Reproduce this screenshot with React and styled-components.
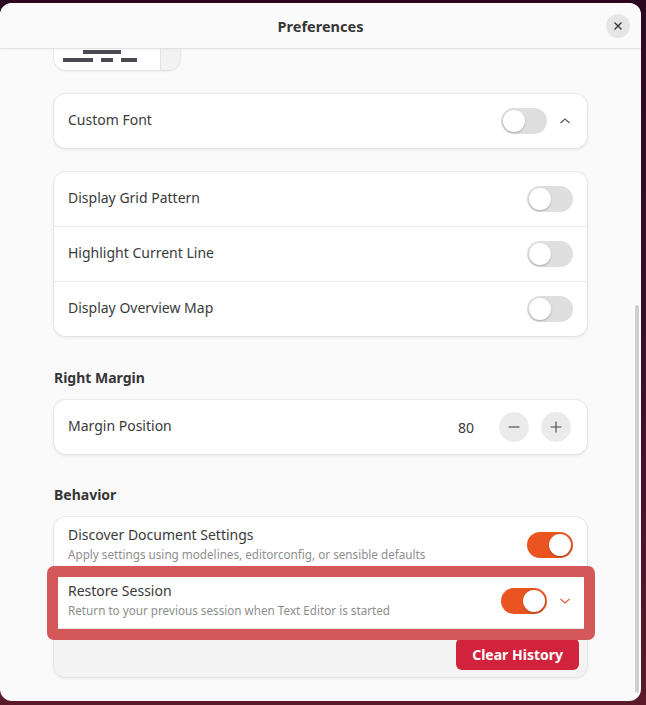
import React from 'react'
import styled, { createGlobalStyle } from 'styled-components'

const GlobalStyle = createGlobalStyle`
  body {
    margin: 0;
    background: linear-gradient(180deg, #2a0920 0%, #3d0d2a 50%, #5a1a2a 100%);
    font-family: "Noto Sans", "Open Sans", sans-serif;
  }
`

const Desktop = styled.div`
  height: 705px;
  padding-top: 3px;
  box-sizing: border-box;
`

const Window = styled.div`
  position: relative;
  width: 641px;
  height: 698px;
  background: #fafafa;
  border-radius: 12px;
  overflow: hidden;
  display: flex;
  flex-direction: column;
`

const HeaderBar = styled.div`
  position: relative;
  z-index: 3;
  height: 45px;
  flex-shrink: 0;
  display: grid;
  grid-template-columns: 1fr auto 1fr;
  align-items: center;
  background: #fafafa;
  border-bottom: 1px solid #e2e2e2;
  box-shadow: 0 1px 3px rgba(0, 0, 0, 0.04);
`

const Title = styled.h1`
  grid-column: 2;
  margin: 0;
  font-size: 14.5px;
  font-weight: 700;
  color: #363636;
`

const CloseButton = styled.button`
  grid-column: 3;
  justify-self: end;
  margin: 0 11px 0 0;
  width: 24px;
  height: 24px;
  border: none;
  border-radius: 50%;
  background: #e6e6e6;
  display: flex;
  align-items: center;
  justify-content: center;
  padding: 0;
`

const Content = styled.div`
  position: relative;
  flex: 1;
  overflow: hidden;
  display: flex;
  justify-content: center;
`

const Column = styled.div`
  width: 533px;
  display: flex;
  flex-direction: column;
`

const PreviewStub = styled.div`
  width: 126px;
  height: 21px;
  flex-shrink: 0;
  display: flex;
  background: #fff;
  border-radius: 0 0 12px 12px;
  box-shadow: 0 1px 3px rgba(0, 0, 0, 0.1), 0 0 0 1px rgba(0, 0, 0, 0.03);
  overflow: hidden;
`

const PreviewText = styled.div`
  flex: 1;
`

const PreviewArrow = styled.div`
  width: 19px;
  background: #f2f2f2;
  border-left: 1px solid #e3e3e3;
`

const Card = styled.div`
  background: #fff;
  border-radius: 12px;
  margin-top: ${(p) => p.$gap || 0}px;
  box-shadow: 0 0 0 1px rgba(0, 0, 0, 0.035), 0 1px 3px 1px rgba(0, 0, 0, 0.07);
`

const CardWrap = styled.div`
  position: relative;
`

const Row = styled.div`
  height: ${(p) => (p.$tall ? 55 : 54)}px;
  padding: 0 14px;
  display: flex;
  align-items: center;
  gap: 12px;
  & + & {
    border-top: 1px solid #ebebeb;
  }
`

const Labels = styled.div`
  flex: 1;
  display: flex;
  flex-direction: column;
  padding-bottom: 2px;
`

const RowTitle = styled.span`
  font-size: 14px;
  line-height: 20px;
  color: #3a3a3a;
`

const RowSubtitle = styled.span`
  font-size: 11.7px;
  line-height: 18px;
  color: #8e8e8e;
`

const Heading = styled.h2`
  margin: ${(p) => p.$top || 32}px 0 12px;
  font-size: 14px;
  line-height: 20px;
  font-weight: 700;
  color: #363636;
`

const Track = styled.div`
  width: 46px;
  height: 26px;
  border-radius: 13px;
  background: ${(p) => (p.$on ? '#e95420' : '#dfdfdf')};
  position: relative;
  flex-shrink: 0;
`

const Knob = styled.div`
  position: absolute;
  top: 2px;
  left: ${(p) => (p.$on ? 22 : 2)}px;
  width: 22px;
  height: 22px;
  border-radius: 50%;
  background: #fff;
  box-shadow: 0 1px 2px rgba(0, 0, 0, 0.25);
`

const Toggle = ({ on }) => (
  <Track $on={on}>
    <Knob $on={on} />
  </Track>
)

const Chevron = styled.svg`
  width: 12px;
  height: 12px;
  margin-right: 2px;
  flex-shrink: 0;
`

const Value = styled.span`
  font-size: 14px;
  color: #3a3a3a;
  margin-right: 13px;
`

const RoundButton = styled.div`
  width: 30px;
  height: 30px;
  border-radius: 50%;
  background: #ebebeb;
  display: flex;
  align-items: center;
  justify-content: center;
  margin-right: ${(p) => p.$mr || 0}px;
`

const Expanded = styled.div`
  background: #f3f3f3;
  border-top: 1px solid #e6e6e6;
  border-radius: 0 0 12px 12px;
  padding: 9px 8px 7px;
  display: flex;
  justify-content: flex-end;
`

const DangerButton = styled.button`
  height: 32px;
  padding: 0 16px;
  border: none;
  border-radius: 6px;
  background: #d2233c;
  color: #fff;
  font-family: inherit;
  font-size: 14px;
  font-weight: 700;
`

const Highlight = styled.div`
  position: absolute;
  z-index: 2;
  left: -7px;
  top: 49px;
  width: 548px;
  height: 74px;
  box-sizing: border-box;
  border: 11px solid #d4585a;
  border-radius: 7px;
`

const Scrollbar = styled.div`
  position: absolute;
  right: 2px;
  top: 256px;
  width: 4px;
  height: 388px;
  border-radius: 2px;
  background: #cfcfcf;
`

const ChevronIcon = ({ up, color = '#555' }) => (
  <Chevron viewBox="0 0 12 12">
    <path
      d={up ? 'M1.5 8 L6 4 L10.5 8' : 'M1.5 4 L6 8 L10.5 4'}
      fill="none"
      stroke={color}
      strokeWidth="1.1"
    />
  </Chevron>
)

const App = () => {
  return (
    <Desktop>
      <GlobalStyle />
      <Window>
        <HeaderBar>
          <Title>Preferences</Title>
          <CloseButton aria-label="Close">
            <svg width="10" height="10" viewBox="0 0 10 10">
              <path d="M1.5 1.5 L8.5 8.5 M8.5 1.5 L1.5 8.5" stroke="#3a3a3a" strokeWidth="1.4" />
            </svg>
          </CloseButton>
        </HeaderBar>
        <Content>
          <Column>
            <PreviewStub>
              <PreviewText>
                <svg width="106" height="21" viewBox="0 0 106 21">
                  <g fill="#4a4a50">
                    <rect x="29" y="1" width="38" height="4" />
                    <rect x="9" y="9" width="30" height="4" />
                    <rect x="47" y="9" width="12" height="4" />
                    <rect x="67" y="9" width="16" height="4" />
                  </g>
                </svg>
              </PreviewText>
              <PreviewArrow />
            </PreviewStub>

            <Card $gap={24}>
              <Row>
                <Labels><RowTitle>Custom Font</RowTitle></Labels>
                <Toggle on={false} />
                <ChevronIcon up />
              </Row>
            </Card>

            <Card $gap={24}>
              <Row>
                <Labels><RowTitle>Display Grid Pattern</RowTitle></Labels>
                <Toggle on={false} />
              </Row>
              <Row>
                <Labels><RowTitle>Highlight Current Line</RowTitle></Labels>
                <Toggle on={false} />
              </Row>
              <Row>
                <Labels><RowTitle>Display Overview Map</RowTitle></Labels>
                <Toggle on={false} />
              </Row>
            </Card>

            <Heading>Right Margin</Heading>
            <Card>
              <Row>
                <Labels><RowTitle>Margin Position</RowTitle></Labels>
                <Value>80</Value>
                <RoundButton>
                  <svg width="14" height="14" viewBox="0 0 14 14">
                    <path d="M1.5 7 H12.5" stroke="#444" strokeWidth="1.1" />
                  </svg>
                </RoundButton>
                <RoundButton $mr={2}>
                  <svg width="14" height="14" viewBox="0 0 14 14">
                    <path d="M1.5 7 H12.5 M7 1.5 V12.5" stroke="#444" strokeWidth="1.1" />
                  </svg>
                </RoundButton>
              </Row>
            </Card>

            <Heading $top={31}>Behavior</Heading>
            <CardWrap>
              <Card>
                <Row $tall>
                  <Labels>
                    <RowTitle>Discover Document Settings</RowTitle>
                    <RowSubtitle>Apply settings using modelines, editorconfig, or sensible defaults</RowSubtitle>
                  </Labels>
                  <Toggle on />
                </Row>
                <Row $tall>
                  <Labels>
                    <RowTitle>Restore Session</RowTitle>
                    <RowSubtitle>Return to your previous session when Text Editor is started</RowSubtitle>
                  </Labels>
                  <Toggle on />
                  <ChevronIcon color="#e2563a" />
                </Row>
                <Expanded>
                  <DangerButton>Clear History</DangerButton>
                </Expanded>
              </Card>
              <Highlight />
            </CardWrap>
          </Column>
          <Scrollbar />
        </Content>
      </Window>
    </Desktop>
  )
}

export default App
